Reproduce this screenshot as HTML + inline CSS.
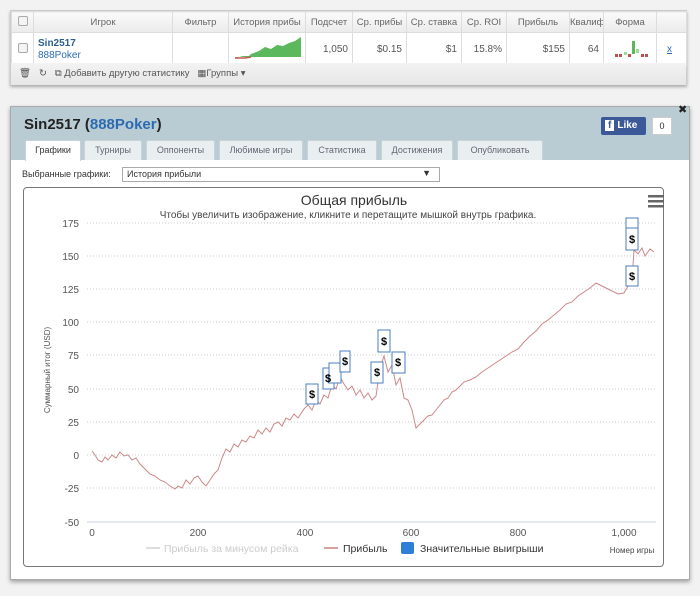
<!DOCTYPE html>
<html><head><meta charset="utf-8">
<style>
*{box-sizing:border-box;margin:0;padding:0}
body{width:700px;height:596px;background:#f2f2f2;font-family:"Liberation Sans","DejaVu Sans",sans-serif;position:relative;overflow:hidden}
.p1{position:absolute;left:10px;top:10px;width:677px;height:75px;background:#fff;border:1px solid #ccc;box-shadow:0 2px 3px rgba(0,0,0,.3)}
table{border-collapse:collapse;font-size:9.5px;color:#555}
td,th{border:1px solid #ddd;font-weight:normal;height:21px;white-space:nowrap;overflow:hidden}
th{background:linear-gradient(#fafafa,#ebebeb);text-align:center;color:#666}
.r td{height:30px;text-align:right;padding-right:4px;font-size:10px}
.cb{display:inline-block;width:10px;height:10px;border:1px solid #aaa;border-radius:2px;background:#f4f4f4}
.tb{position:absolute;left:0;top:52px;width:675px;height:22px;background:linear-gradient(#f3f3f3,#e6e6e6);font-size:9.5px;color:#555;padding:5px 8px}
.p2{position:absolute;left:10px;top:106px;width:680px;height:474px;background:#fff;box-shadow:0 2px 4px rgba(0,0,0,.35);border:1px solid #aaa}
.hd{height:53px;background:#b9ccd4;position:relative}
.title{position:absolute;left:13px;top:9px;font-size:15px;font-weight:bold;color:#222}
.title span{color:#2d6bb0}
.tabs{position:absolute;left:14px;top:33px;font-size:9px}
.tab{position:absolute;top:0;height:20px;background:#e9eef0;border:1px solid #c8d3d8;border-bottom:none;color:#667;text-align:center;line-height:19px;border-radius:2px 2px 0 0}
.tab.a{background:#fff;color:#333;height:21px}
</style></head><body>
<div class="p1">
<table style="width:675px;table-layout:fixed">
<colgroup><col style="width:22px"><col style="width:139px"><col style="width:56px"><col style="width:77px"><col style="width:47px"><col style="width:54px"><col style="width:55px"><col style="width:45px"><col style="width:63px"><col style="width:34px"><col style="width:53px"><col style="width:30px"></colgroup>
<tr><th><span class="cb"></span></th><th>Игрок</th><th>Фильтр</th><th>История прибы</th><th>Подсчет</th><th>Ср. прибы</th><th>Ср. ставка</th><th>Ср. ROI</th><th>Прибыль</th><th>Квалиф</th><th>Форма</th><th></th></tr>
<tr class="r"><td style="text-align:center;padding:0"><span class="cb"></span></td><td style="text-align:left;padding-left:4px;line-height:12px"><b style="color:#2d5d95">Sin2517</b><br><span style="color:#2d6bb0">888Poker</span></td><td></td>
<td style="padding:0"><svg width="77" height="30"><path d="M6,25 L14,23 L20,23 L22,21 L30,18 L36,14 L42,16 L48,12 L54,13 L60,10 L66,8 L72,4 L72,24 L6,24Z" fill="#5cb85c"/><path d="M6,25 L16,25 L22,24" stroke="#c55" stroke-width="1.5" fill="none"/></svg></td>
<td>1,050</td><td>$0.15</td><td>$1</td><td>15.8%</td><td>$155</td><td>64</td>
<td style="padding:0"><svg width="53" height="30"><rect x="11" y="21" width="3" height="3" fill="#c0504d"/><rect x="15" y="21" width="3" height="3" fill="#c0504d"/><rect x="20" y="19" width="3" height="3" fill="#9d9"/><rect x="24" y="21" width="3" height="3" fill="#c0504d"/><rect x="28" y="8" width="3" height="13" fill="#5cb85c"/><rect x="32" y="16" width="3" height="4" fill="#9d9"/><rect x="37" y="21" width="3" height="3" fill="#c0504d"/><rect x="41" y="21" width="3" height="3" fill="#c0504d"/></svg></td>
<td style="text-align:center;color:#2d6bb0;text-decoration:underline">x</td></tr>
</table>
<div class="tb">🗑 &nbsp; ↻ &nbsp; ⧉ Добавить другую статистику &nbsp; ▦Группы ▾</div>
</div>

<div class="p2">
<div class="hd">
<div class="title">Sin2517 (<span>888Poker</span>)</div>
<div style="position:absolute;left:590px;top:10px;width:45px;height:18px;background:#3b5998;color:#fff;font-size:10px;font-weight:bold;line-height:18px;padding-left:4px;border-radius:2px"><span style="background:#fff;color:#3b5998;padding:0 3px;margin-right:3px">f</span>Like</div>
<div style="position:absolute;left:641px;top:10px;width:20px;height:18px;background:#fff;border:1px solid #ccc;font-size:9px;text-align:center;line-height:16px;color:#333">0</div>
<div style="position:absolute;left:667px;top:-4px;font-size:11px;font-weight:bold;color:#222">✖</div>
<div class="tabs">
<div class="tab a" style="left:0;width:56px">Графики</div>
<div class="tab" style="left:59px;width:58px">Турниры</div>
<div class="tab" style="left:121px;width:69px">Оппоненты</div>
<div class="tab" style="left:194px;width:84px">Любимые игры</div>
<div class="tab" style="left:282px;width:70px">Статистика</div>
<div class="tab" style="left:356px;width:72px">Достижения</div>
<div class="tab" style="left:432px;width:86px">Опубликовать</div>
</div></div>
<div style="position:absolute;left:11px;top:62px;font-size:9px;color:#333">Выбранные графики:</div>
<div style="position:absolute;left:111px;top:60px;width:318px;height:15px;border:1px solid #aaa;font-size:9px;color:#333;padding:1px 4px">История прибыли<span style="position:absolute;right:8px;top:0">▼</span></div>
<div style="position:absolute;left:12px;top:80px;width:641px;height:380px;border:1px solid #777;border-radius:4px"></div>
</div>

<svg style="position:absolute;left:0;top:0" width="700" height="596" font-family="Liberation Sans, DejaVu Sans, sans-serif">
<text x="354" y="205" font-size="14" fill="#333" text-anchor="middle">Общая прибыль</text>
<text x="348" y="218" font-size="10" fill="#444" text-anchor="middle">Чтобы увеличить изображение, кликните и перетащите мышкой внутрь графика.</text>
<g fill="#666"><rect x="648" y="195" width="16" height="2.5"/><rect x="648" y="200" width="16" height="2.5"/><rect x="648" y="205" width="16" height="2.5"/></g>
<g stroke="#ccc" stroke-dasharray="1,2" stroke-width="1">
<line x1="87" y1="223" x2="656" y2="223"/><line x1="87" y1="256" x2="656" y2="256"/><line x1="87" y1="289" x2="656" y2="289"/><line x1="87" y1="322" x2="656" y2="322"/><line x1="87" y1="355" x2="656" y2="355"/><line x1="87" y1="389" x2="656" y2="389"/><line x1="87" y1="422" x2="656" y2="422"/><line x1="87" y1="455" x2="656" y2="455"/><line x1="87" y1="488" x2="656" y2="488"/>
</g>
<line x1="87" y1="522" x2="656" y2="522" stroke="#c8d0e0"/>
<g font-size="10" fill="#555" text-anchor="end">
<text x="79" y="227">175</text><text x="79" y="260">150</text><text x="79" y="293">125</text><text x="79" y="326">100</text><text x="79" y="359">75</text><text x="79" y="393">50</text><text x="79" y="426">25</text><text x="79" y="459">0</text><text x="79" y="492">-25</text><text x="79" y="526">-50</text></g>
<g font-size="10" fill="#555" text-anchor="middle"><text x="92" y="536">0</text><text x="198" y="536">200</text><text x="305" y="536">400</text><text x="411" y="536">600</text><text x="518" y="536">800</text><text x="624" y="536">1,000</text></g>
<text transform="translate(50,370) rotate(-90)" font-size="8" fill="#555" text-anchor="middle">Суммарный итог (USD)</text>
<text x="632" y="553" font-size="8" fill="#444" text-anchor="middle">Номер игры</text>
<line x1="146" y1="548" x2="160" y2="548" stroke="#ddd" stroke-width="2"/>
<text x="164" y="552" font-size="10.5" fill="#ccc">Прибыль за минусом рейка</text>
<line x1="324" y1="548" x2="338" y2="548" stroke="#d9a0a0" stroke-width="2"/>
<text x="343" y="552" font-size="10.5" fill="#333">Прибыль</text>
<rect x="401" y="542" width="13" height="12" rx="2" fill="#2f7ed8"/>
<text x="420" y="552" font-size="10.5" fill="#333">Значительные выигрыши</text>
<polyline fill="none" stroke="#c88" stroke-width="1" points="92,451 95,455 98,460 102,462 105,457 108,460 112,455 116,458 120,452 124,456 128,455 132,460 136,458 140,464 145,469 150,474 155,476 160,480 165,482 170,486 175,489 178,486 182,488 186,480 190,484 194,478 198,476 202,482 206,486 210,480 214,474 218,470 222,458 226,449 230,452 234,444 238,447 242,440 246,442 250,436 254,438 258,430 262,434 266,428 270,432 274,424 278,422 282,426 286,418 290,420 294,414 298,418 304,409 308,405 312,410 316,400 320,404 324,395 328,398 332,385 336,389 340,377 344,384 348,390 352,386 356,395 360,390 364,398 368,393 372,400 376,396 380,368 384,356 388,372 392,365 396,385 400,378 404,398 408,400 412,410 416,428 420,424 424,420 428,416 432,415 436,410 440,405 444,400 448,398 452,392 456,390 460,386 464,382 470,380 476,377 482,372 488,368 494,364 500,360 506,356 512,352 518,349 524,342 530,336 536,331 542,324 548,320 554,315 560,310 566,304 572,302 578,296 584,292 590,288 596,283 600,285 606,288 612,291 618,294 624,293 628,286 632,281 634,250 638,254 642,248 645,256 650,249 654,252"/>
<g font-size="11" font-weight="bold" fill="#000" text-anchor="middle">
<g stroke="#4a7fc0" fill="#fff"><rect x="306" y="384" width="12" height="20"/><rect x="323" y="368" width="11" height="21"/><rect x="329" y="363" width="12" height="20"/><rect x="340" y="351" width="10" height="21"/><rect x="371" y="362" width="12" height="21"/><rect x="378" y="330" width="12" height="22"/><rect x="392" y="352" width="13" height="21"/><rect x="626" y="218" width="12" height="10"/><rect x="626" y="228" width="12" height="22"/><rect x="626" y="266" width="12" height="20"/></g>
<text x="312" y="398">$</text><text x="328" y="382">$</text><text x="345" y="365">$</text><text x="377" y="376">$</text><text x="384" y="345">$</text><text x="398" y="366">$</text><text x="632" y="243">$</text><text x="632" y="280">$</text></g>
</svg>
</body></html>
